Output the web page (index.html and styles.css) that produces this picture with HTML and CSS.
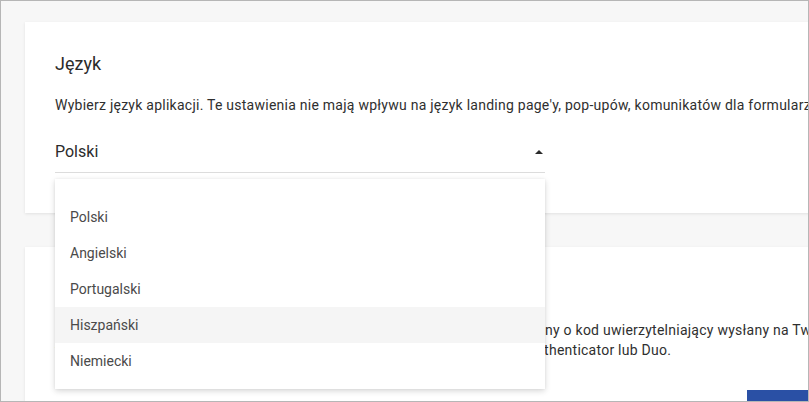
FILE: index.html
```html
<!DOCTYPE html>
<html lang="pl">
<head>
<meta charset="utf-8">
<title>Ustawienia</title>
<link rel="stylesheet" href="styles.css">
</head>
<body>
<div class="frame">
  <section class="card card-lang">
    <h2 class="card-title">Język</h2>
    <p class="card-desc">Wybierz język aplikacji. Te ustawienia nie mają wpływu na język landing page'y, pop-upów, komunikatów dla formularzy.</p>
    <div class="select">
      <div class="select-value">
        <span>Polski</span>
        <span class="select-arrow"></span>
      </div>
      <ul class="select-menu">
        <li class="select-option">Polski</li>
        <li class="select-option">Angielski</li>
        <li class="select-option">Portugalski</li>
        <li class="select-option is-hover">Hiszpański</li>
        <li class="select-option">Niemiecki</li>
      </ul>
    </div>
  </section>
  <section class="card card-2fa">
    <h2 class="card-title">Weryfikacja dwuetapowa</h2>
    <p class="card-desc">Uwierzytelnianie dwuetapowe chroni konto. Przy logowaniu będziesz proszony o kod uwierzytelniający wysłany na Twój telefon<br>w SMS-ie lub wygenerowany w aplikacji Google Authenticator i Microsoft Authenticator lub Duo.</p>
    <div class="card-actions">
      <button class="btn-primary">Włącz</button>
    </div>
  </section>
</div>
</body>
</html>
```
FILE: styles.css
```css
* { box-sizing: border-box; }
html, body { margin: 0; padding: 0; }
body {
  font-family: Roboto, "Noto Sans", "Liberation Sans", sans-serif;
  background: #ffffff;
}
.frame {
  width: 809px;
  height: 402px;
  border: 1px solid #b6b6b6;
  background: #f7f7f7;
  overflow: hidden;
  padding: 21px 0 0 24px;
  display: flex;
  flex-direction: column;
  gap: 34px;
}
.card {
  flex: none;
  width: 900px;
  background: #ffffff;
  box-shadow: 0 1px 3px rgba(0, 0, 0, 0.09);
  padding: 30px 30px 0 30px;
}
.card-lang { height: 191px; }
.card-2fa { height: 200px; }
.card-title {
  margin: 0;
  font-size: 18px;
  line-height: 24px;
  font-weight: 400;
  color: #2b2b2b;
}
.card-desc {
  margin: 19px 0 0 0;
  font-size: 14px;
  line-height: 20px;
  letter-spacing: 0.25px;
  color: #2f2f2f;
  white-space: nowrap;
}
.select {
  position: relative;
  width: 490px;
  margin-top: 25px;
}
.select-value {
  display: flex;
  align-items: center;
  justify-content: space-between;
  font-size: 16px;
  line-height: 24px;
  color: #2b2b2b;
  padding-bottom: 8px;
  border-bottom: 1px solid #dcdcdc;
}
.select-arrow {
  width: 0;
  height: 0;
  margin-right: 2px;
  border-left: 4px solid transparent;
  border-right: 4px solid transparent;
  border-bottom: 4px solid #2b2b2b;
}
.select-menu {
  position: absolute;
  z-index: 10;
  left: 0;
  right: 0;
  top: calc(100% + 6px);
  margin: 0;
  padding: 20px 0 10px 0;
  list-style: none;
  background: #ffffff;
  box-shadow: 0 2px 6px rgba(0, 0, 0, 0.16), 0 0 2px rgba(0, 0, 0, 0.06);
}
.select-option {
  height: 36px;
  display: flex;
  align-items: center;
  padding-left: 15px;
  font-size: 14px;
  color: #4a4a4a;
}
.select-option.is-hover { background: #f5f5f5; }
.card-actions {
  display: flex;
  justify-content: flex-end;
  margin-top: 30px;
}
.btn-primary {
  width: 148px;
  height: 36px;
  border: none;
  background: #2a50a5;
  color: #ffffff;
  font-family: inherit;
  font-size: 14px;
}
```
